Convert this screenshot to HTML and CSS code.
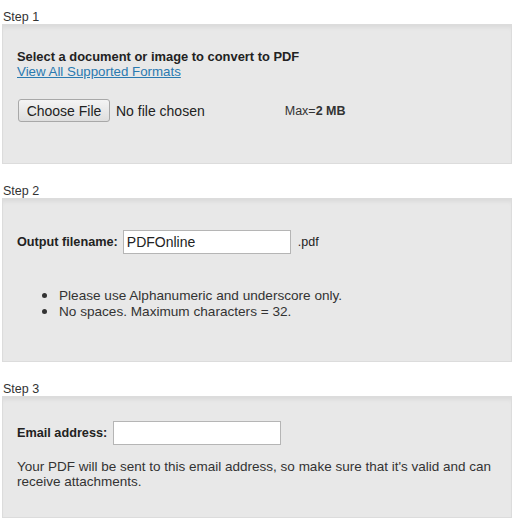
FILE: index.html
```html
<!DOCTYPE html>
<html lang="en">
<head>
    <meta charset="UTF-8">
    <meta name="viewport" content="width=device-width, initial-scale=1.0">
    <title>Convert to PDF</title>
    <link rel="stylesheet" href="styles.css">
</head>
<body>
    <div class="step">
        <div class="step-label">Step 1</div>
        <div class="panel panel-upload">
            <div class="title">Select a document or image to convert to PDF</div>
            <a href="#" class="formats">View All Supported Formats</a>
            <div class="file-row">
                <button class="choose">Choose File</button>
                <span class="chosen">No file chosen</span>
                <span class="max">Max=<b>2 MB</b></span>
            </div>
        </div>
    </div>

    <div class="step">
        <div class="step-label">Step 2</div>
        <div class="panel panel-name">
            <div class="field-row">
                <label for="outName">Output filename:</label>
                <input type="text" id="outName" value="PDFOnline">
                <span class="ext">.pdf</span>
            </div>
            <ul class="rules">
                <li>Please use Alphanumeric and underscore only.</li>
                <li>No spaces. Maximum characters = 32.</li>
            </ul>
        </div>
    </div>

    <div class="step">
        <div class="step-label">Step 3</div>
        <div class="panel panel-email">
            <div class="field-row">
                <label for="email">Email address:</label>
                <input type="text" id="email">
            </div>
            <p class="note">Your PDF will be sent to this email address, so make sure that it's valid and can receive attachments.</p>
        </div>
    </div>
</body>
</html>
```

FILE: styles.css
```css
body {
    margin: 0;
    padding: 10px 1px 0 2px;
    font-family: "Liberation Sans", Arial, sans-serif;
    font-size: 12px;
    color: #222;
    background: #fff;
}
.step-label {
    height: 14px;
    line-height: 14px;
    padding-left: 1px;
    font-size: 12.5px;
    color: #333;
}
.step + .step .step-label {
    margin-top: 20px;
}
.panel {
    background: #e8e8e8;
    border: 1px solid #dcdcdc;
    box-shadow: inset 0 5px 5px -3px rgba(0, 0, 0, 0.07);
    padding: 0 14px;
    box-sizing: border-box;
}
.panel-upload {
    height: 140px;
    padding-top: 24px;
}
.title {
    font-size: 12.9px;
    font-weight: bold;
    line-height: 15px;
    color: #222;
}
.formats {
    display: inline-block;
    font-size: 13.3px;
    color: #2a7ab0;
    line-height: 15px;
}
.file-row {
    display: flex;
    align-items: center;
    margin-top: 20px;
    padding-left: 1px;
}
.choose {
    height: 23px;
    width: 92px;
    padding: 0;
    font-family: "Liberation Sans", Arial, sans-serif;
    font-size: 14px;
    color: #222;
    background: linear-gradient(#f4f4f4, #dedede);
    border: 1px solid #a8a8a8;
    border-radius: 3px;
}
.chosen {
    margin-left: 6px;
    font-size: 14px;
    color: #222;
}
.max {
    margin-left: 80px;
    font-size: 12.5px;
    color: #333;
}
.panel-name {
    height: 164px;
    padding-top: 31px;
}
.field-row {
    display: flex;
    align-items: center;
}
.field-row label {
    font-size: 12.7px;
    font-weight: bold;
    margin-right: 5px;
}
.field-row input {
    width: 168px;
    height: 24px;
    box-sizing: border-box;
    border: 1px solid #b5b5b5;
    background: #fff;
    padding: 0 3px;
    font-family: "Liberation Sans", Arial, sans-serif;
    font-size: 14px;
    color: #222;
}
.panel-email .field-row label {
    margin-right: 6px;
}
.ext {
    margin-left: 7px;
    font-size: 12.5px;
}
.rules {
    margin: 34px 0 0;
    padding-left: 42px;
    list-style: none;
    font-size: 13.6px;
    line-height: 16px;
    color: #333;
}
.rules li::before {
    content: "";
    display: inline-block;
    width: 5px;
    height: 5px;
    border-radius: 50%;
    background: #333;
    margin-left: -17px;
    margin-right: 12px;
    vertical-align: 2px;
}
.panel-email {
    height: 122px;
    padding-top: 24px;
}
.note {
    margin: 14px 0 0;
    font-size: 13.5px;
    line-height: 15px;
    color: #333;
}
```
